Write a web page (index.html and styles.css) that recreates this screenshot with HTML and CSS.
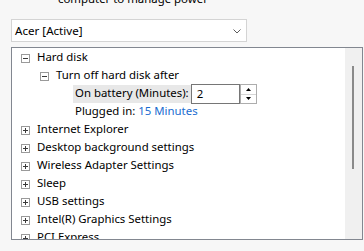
FILE: index.html
```html
<!DOCTYPE html>
<html>
<head>
<meta charset="utf-8">
<link rel="stylesheet" href="styles.css">
</head>
<body>
<div class="intro">computer to manage power</div>
<div class="select">
  <span class="select-text">Acer [Active]</span>
  <svg class="chev" width="8" height="5" viewBox="0 0 8 5"><polyline points="0.5,0.5 4,4 7.5,0.5" fill="none" stroke="#5c5c5c" stroke-width="1"/></svg>
</div>
<div class="tree">
  <div class="list">
    <div class="row lvl0">
      <svg class="exp" width="9" height="9" viewBox="0 0 9 9"><rect x="0.5" y="0.5" width="8" height="8" fill="#fff" stroke="#9a9a9a"/><line x1="2" y1="4.5" x2="7" y2="4.5" stroke="#3a3a3a"/></svg>
      <span class="label">Hard disk</span>
    </div>
    <div class="row lvl1">
      <svg class="exp" width="9" height="9" viewBox="0 0 9 9"><rect x="0.5" y="0.5" width="8" height="8" fill="#fff" stroke="#9a9a9a"/><line x1="2" y1="4.5" x2="7" y2="4.5" stroke="#3a3a3a"/></svg>
      <span class="label">Turn off hard disk after</span>
    </div>
    <div class="row lvl2">
      <span class="spacer"></span>
      <span class="label sel">On battery (Minutes):</span>
      <span class="spin-input">2</span>
      <span class="spin">
        <span class="spin-btn"><svg width="5" height="3" viewBox="0 0 5 3"><polygon points="2.5,0 5,3 0,3" fill="#000"/></svg></span>
        <span class="spin-btn"><svg width="5" height="3" viewBox="0 0 5 3"><polygon points="0,0 5,0 2.5,3" fill="#000"/></svg></span>
      </span>
    </div>
    <div class="row lvl2">
      <span class="spacer"></span>
      <span class="label">Plugged in: <span class="link">15 Minutes</span></span>
    </div>
    <div class="row lvl0">
      <svg class="exp" width="9" height="9" viewBox="0 0 9 9"><rect x="0.5" y="0.5" width="8" height="8" fill="#fff" stroke="#9a9a9a"/><line x1="2" y1="4.5" x2="7" y2="4.5" stroke="#3a3a3a"/><line x1="4.5" y1="2" x2="4.5" y2="7" stroke="#3a3a3a"/></svg>
      <span class="label">Internet Explorer</span>
    </div>
    <div class="row lvl0">
      <svg class="exp" width="9" height="9" viewBox="0 0 9 9"><rect x="0.5" y="0.5" width="8" height="8" fill="#fff" stroke="#9a9a9a"/><line x1="2" y1="4.5" x2="7" y2="4.5" stroke="#3a3a3a"/><line x1="4.5" y1="2" x2="4.5" y2="7" stroke="#3a3a3a"/></svg>
      <span class="label">Desktop background settings</span>
    </div>
    <div class="row lvl0">
      <svg class="exp" width="9" height="9" viewBox="0 0 9 9"><rect x="0.5" y="0.5" width="8" height="8" fill="#fff" stroke="#9a9a9a"/><line x1="2" y1="4.5" x2="7" y2="4.5" stroke="#3a3a3a"/><line x1="4.5" y1="2" x2="4.5" y2="7" stroke="#3a3a3a"/></svg>
      <span class="label">Wireless Adapter Settings</span>
    </div>
    <div class="row lvl0">
      <svg class="exp" width="9" height="9" viewBox="0 0 9 9"><rect x="0.5" y="0.5" width="8" height="8" fill="#fff" stroke="#9a9a9a"/><line x1="2" y1="4.5" x2="7" y2="4.5" stroke="#3a3a3a"/><line x1="4.5" y1="2" x2="4.5" y2="7" stroke="#3a3a3a"/></svg>
      <span class="label">Sleep</span>
    </div>
    <div class="row lvl0">
      <svg class="exp" width="9" height="9" viewBox="0 0 9 9"><rect x="0.5" y="0.5" width="8" height="8" fill="#fff" stroke="#9a9a9a"/><line x1="2" y1="4.5" x2="7" y2="4.5" stroke="#3a3a3a"/><line x1="4.5" y1="2" x2="4.5" y2="7" stroke="#3a3a3a"/></svg>
      <span class="label">USB settings</span>
    </div>
    <div class="row lvl0">
      <svg class="exp" width="9" height="9" viewBox="0 0 9 9"><rect x="0.5" y="0.5" width="8" height="8" fill="#fff" stroke="#9a9a9a"/><line x1="2" y1="4.5" x2="7" y2="4.5" stroke="#3a3a3a"/><line x1="4.5" y1="2" x2="4.5" y2="7" stroke="#3a3a3a"/></svg>
      <span class="label">Intel(R) Graphics Settings</span>
    </div>
    <div class="row lvl0">
      <svg class="exp" width="9" height="9" viewBox="0 0 9 9"><rect x="0.5" y="0.5" width="8" height="8" fill="#fff" stroke="#9a9a9a"/><line x1="2" y1="4.5" x2="7" y2="4.5" stroke="#3a3a3a"/><line x1="4.5" y1="2" x2="4.5" y2="7" stroke="#3a3a3a"/></svg>
      <span class="label">PCI Express</span>
    </div>
  </div>
  <div class="scrollbar"><div class="thumb"></div></div>
</div>
</body>
</html>
```

FILE: styles.css
```css
html, body {
  margin: 0;
  padding: 0;
}
body {
  background: #f7f7f7;
  font-family: "Noto Sans", "Open Sans", sans-serif;
  font-size: 11.4px;
  color: #000;
  width: 364px;
  height: 251px;
  overflow: hidden;
}
.intro {
  margin-top: -9px;
  padding-left: 58px;
  line-height: 16px;
  height: 16px;
}
.select {
  box-sizing: border-box;
  margin: 12px 0 0 11px;
  width: 236px;
  height: 23px;
  border: 1px solid #d4d4d4;
  background: #fff;
  display: flex;
  align-items: center;
  justify-content: space-between;
  padding: 0 5px 0 3px;
}
.select-text {
  line-height: 21px;
  font-size: 11.6px;
}
.chev {
  display: block;
  margin-top: 1px;
}
.tree {
  box-sizing: border-box;
  margin: 5px 0 0 11px;
  width: 352px;
  height: 193px;
  border: 1px solid #828790;
  background: #fff;
  display: flex;
}
.list {
  flex: 1;
  overflow: hidden;
  padding-top: 1px;
}
.row {
  height: 18px;
  display: flex;
  align-items: center;
  white-space: nowrap;
}
.lvl0 { padding-left: 9px; }
.lvl1 { padding-left: 28px; }
.lvl2 { padding-left: 47px; }
.exp {
  display: block;
  flex: none;
}
.spacer {
  width: 9px;
  flex: none;
}
.label {
  margin-left: 5px;
  padding: 0 2px 2px 2px;
  line-height: 16px;
}
.label.sel {
  background: #e8e8e8;
}
.link {
  color: #1a6cd0;
}
.spin-input {
  box-sizing: border-box;
  width: 49px;
  height: 20px;
  border: 1px solid #767676;
  background: #fff;
  padding-left: 5px;
  line-height: 17px;
  flex: none;
}
.spin {
  box-sizing: border-box;
  width: 17px;
  height: 20px;
  border: 1px solid #adadad;
  background: #fff;
  display: flex;
  flex-direction: column;
  flex: none;
}
.spin-btn {
  flex: 1;
  display: flex;
  align-items: center;
  justify-content: center;
}
.spin-btn + .spin-btn {
  border-top: 1px solid #d6d6d6;
}
.spin-btn svg {
  display: block;
}
.scrollbar {
  width: 17px;
  flex: none;
  background: #f0f0f0;
}
.thumb {
  width: 2px;
  height: 103px;
  margin: 18px 0 0 7px;
  background: #8a8a8a;
}
```
